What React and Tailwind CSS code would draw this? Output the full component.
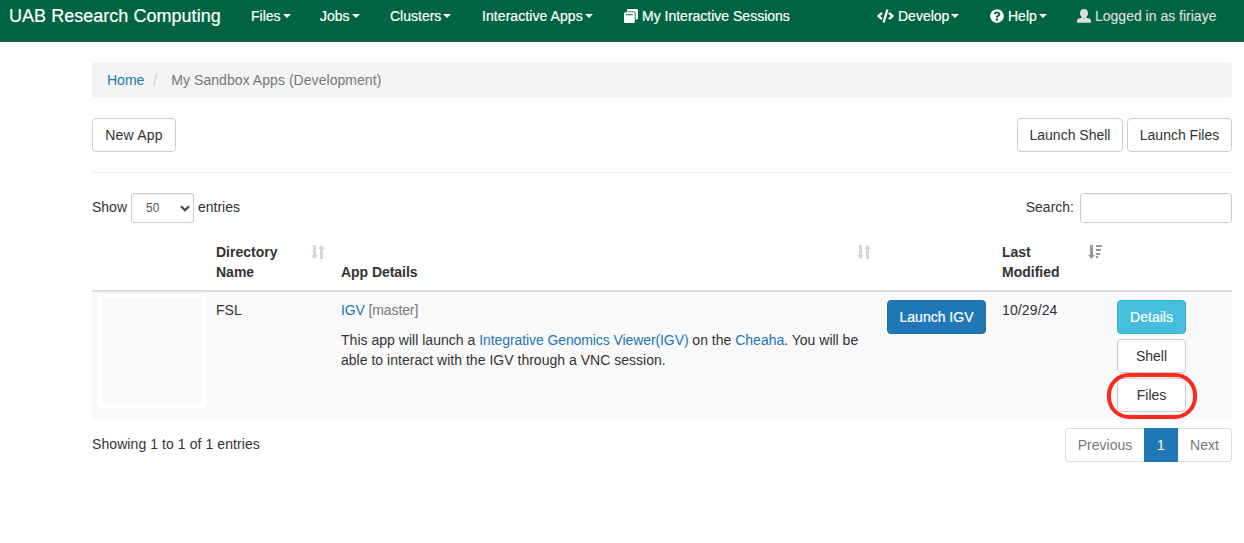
import { FaCode, FaQuestionCircle } from "react-icons/fa";

function Caret() {
  return (
    <span className="ml-0.5 inline-block border-x-4 border-t-4 border-x-transparent border-t-current align-middle" />
  );
}

function NavItem({ className, label, caret = true, children }) {
  return (
    <a className={`flex shrink-0 items-center whitespace-nowrap text-white [-webkit-text-stroke:0.2px] ${className}`}>
      {children}
      <span>{label}</span>
      {caret && <Caret />}
    </a>
  );
}

function Button({ className, children }) {
  return (
    <button
      className={`flex h-[34px] items-center justify-center whitespace-nowrap rounded border pb-px ${className}`}
    >
      {children}
    </button>
  );
}

function SessionsIcon() {
  return (
    <svg className="mr-1 size-[14px] shrink-0" viewBox="0 0 14 14" fill="currentColor">
      <path d="M4.200 0h8.400Q14 0 14 1.400v7.800q0 1.400-1.400 1.400h-1V4Q11.600 2.400 10 2.400H2.800V1.400Q2.800 0 4.200 0z" />
      <path
        fillRule="evenodd"
        d="M1.300 3.200h8.200q1.300 0 1.300 1.300v8.200q0 1.300-1.300 1.300H1.300Q0 14 0 12.700V4.500Q0 3.200 1.300 3.200zM1.900 5.200v1h6.800v-1z"
      />
    </svg>
  );
}

function UserIcon() {
  return (
    <svg className="mr-1 size-[14px] shrink-0" viewBox="0 0 14 14" fill="currentColor">
      <path d="M7 0c2.500 0 4 1.600 4 4 0 2-.8 3.500-1.900 4.300v.5l3.300.7q1.600.5 1.600 2.300v1.200q0 .8-.8.800H.8Q0 13.800 0 13v-1.200q0-1.800 1.600-2.300l3.300-.7v-.5C3.800 7.500 3 6 3 4 3 1.600 4.500 0 7 0z" />
    </svg>
  );
}

function SortIcon() {
  return (
    <svg className="mt-2.5 h-[14px] w-[14px] shrink-0 text-[#d6d6d6]" viewBox="0 0 14 14" fill="currentColor">
      <path d="M2 0h3v10h2L3.500 14 0 10h2zM9 14h3V4h2l-3.500-4L7 4h2z" />
    </svg>
  );
}

function SortDescIcon() {
  return (
    <svg className="mt-2.5 h-[14px] w-[14px] shrink-0 text-[#999]" viewBox="0 0 14 14" fill="currentColor">
      <path d="M2 0h3v10h2L3.500 14 0 10h2zM8 0h6v2H8zM8 4h5v2H8zM8 8h4v2H8zM8 11h2v2H8z" />
    </svg>
  );
}

const columns = "grid grid-cols-[116px_125px_546px_115px_115px_123px]";
const plain = "border-[#ccc] bg-white text-[#333]";

export default function App() {
  return (
    <div className="h-[543px] w-[1244px] overflow-hidden bg-white font-['Liberation_Sans',Arial,sans-serif] text-sm leading-5 text-[#333]">
      <nav className="flex h-[42px] items-start border-b border-[#2f4f43] bg-[#006341] pt-1.5">
        <a className="w-[242px] shrink-0 whitespace-nowrap pl-[9px] text-[18px] tracking-[0.03px] text-white [-webkit-text-stroke:0.2px]">
          UAB Research Computing
        </a>
        <NavItem className="w-[69px] pl-[9px]" label="Files" />
        <NavItem className="w-[70px] pl-[9px]" label="Jobs" />
        <NavItem className="w-[92px] pl-[9px]" label="Clusters" />
        <NavItem className="w-[142px] pl-[9px] tracking-[0.07px]" label="Interactive Apps" />
        <NavItem className="w-[253px] pl-[9px]" label="My Interactive Sessions" caret={false}>
          <SessionsIcon />
        </NavItem>
        <NavItem className="w-[113px] pl-[9px]" label="Develop">
          <FaCode className="mr-1 h-[14px] w-[17px]" />
        </NavItem>
        <NavItem className="w-[86px] pl-[9px]" label="Help">
          <FaQuestionCircle className="mr-1 size-[14px]" />
        </NavItem>
        <div className="flex items-center whitespace-nowrap pl-2.5 text-[#ddd] [-webkit-text-stroke:0.2px]">
          <UserIcon />
          <span>Logged in as firiaye</span>
        </div>
      </nav>

      <main className="ml-[92px] w-[1140px] pt-5">
        <div className="flex h-9 items-center rounded bg-[#f4f4f4] px-[15px]">
          <a className="text-[#1a76b5]">Home</a>
          <span className="ml-[9px] w-[18px] text-[#ccc]">/</span>
          <span className="tracking-[0.05px] text-[#777]">My Sandbox Apps (Development)</span>
        </div>

        <div className="mt-5 flex justify-between">
          <Button className={`w-[84px] tracking-[0.2px] ${plain}`}>New App</Button>
          <div className="flex gap-1">
            <Button className={`w-[106px] ${plain}`}>Launch Shell</Button>
            <Button className={`w-[105px] ${plain}`}>Launch Files</Button>
          </div>
        </div>
        <hr className="mt-5 border-[#eee]" />

        <div className="mt-5 flex h-[30px] items-center justify-between">
          <div className="flex items-center">
            <span className="w-[39px] pb-0.5">Show</span>
            <div className="flex h-[30px] w-[63px] items-center justify-between rounded-[3px] border border-[#ccc] pl-3.5 pr-[3px] text-xs text-[#555] shadow-[inset_0_1px_1px_rgba(0,0,0,0.075)]">
              <span>50</span>
              <svg className="h-[7px] w-[10px]" viewBox="0 0 10 7" fill="none" stroke="#444" strokeWidth="2.200">
                <path d="M1 1.200l4 4 4-4" />
              </svg>
            </div>
            <span className="ml-1 pb-0.5">entries</span>
          </div>
          <label className="flex items-center gap-1.5">
            <span className="pb-0.5">Search:</span>
            <input className="h-[30px] w-[152px] rounded-[3px] border border-[#ccc] px-2.5 shadow-[inset_0_1px_1px_rgba(0,0,0,0.075)]" />
          </label>
        </div>

        <div className="mt-3">
          <div className={`${columns} h-[57px] border-b-2 border-[#ddd] font-bold`}>
            <div />
            <div className="flex justify-between px-2">
              <span className="w-[72px] pt-[7px]">Directory Name</span>
              <SortIcon />
            </div>
            <div className="flex justify-between px-2">
              <span className="pt-[27px] tracking-[-0.05px]">App Details</span>
              <SortIcon />
            </div>
            <div />
            <div className="flex justify-between pl-2 pr-[7px]">
              <span className="w-[62px] pt-[7px]">Last Modified</span>
              <SortDescIcon />
            </div>
            <div />
          </div>

          <div className={`${columns} h-32 bg-[#f9f9f9]`}>
            <div className="pl-1.5 pt-0.5">
              <div className="h-[114px] w-[108px] border-4 border-white" />
            </div>
            <div className="px-2 pt-2">FSL</div>
            <div className="px-2 pt-2">
              <p className="tracking-[-0.12px]">
                <a className="text-[#1a76b5]">IGV</a> <span className="text-[#777]">[master]</span>
              </p>
              <p className="mt-2.5">
                <span className="tracking-[0.02px]">This app will launch a </span>
                <a className="tracking-[-0.09px] text-[#1a76b5]">Integrative Genomics Viewer(IGV)</a> on the{" "}
                <a className="text-[#1a76b5]">Cheaha</a>. You will be
                <br />
                <span className="tracking-[0.02px]">able to interact with the IGV through a VNC session.</span>
              </p>
            </div>
            <div className="px-2 pt-2">
              <Button className="w-[99px] border-[#1b6da8] bg-[#1f78b5] text-white [-webkit-text-stroke:0.2px]">
                Launch IGV
              </Button>
            </div>
            <div className="px-2 pt-2 tracking-[0.12px]">10/29/24</div>
            <div className="flex flex-col gap-[5px] px-2 pt-2">
              <Button className="w-[69px] border-[#28b3d3] bg-[#45bfdd] text-white [-webkit-text-stroke:0.2px]">
                Details
              </Button>
              <Button className={`w-[69px] ${plain}`}>Shell</Button>
              <div className="relative w-[69px]">
                <Button className={`w-[69px] ${plain}`}>Files</Button>
                <div className="absolute -left-2.5 -top-[5px] h-[46px] w-[90px] rounded-[22px] border-4 border-[#fb2a1d]" />
              </div>
            </div>
          </div>
        </div>

        <div className="mt-2 flex items-start justify-between">
          <span className="pt-1.5 tracking-[0.08px]">Showing 1 to 1 of 1 entries</span>
          <div className="flex h-[34px] text-[#777]">
            <span className="flex w-[79px] items-center justify-center rounded-l border-y border-l border-[#ddd]">
              Previous
            </span>
            <span className="flex w-[34px] items-center justify-center bg-[#1f78b5] text-white">1</span>
            <span className="flex w-[54px] items-center justify-center rounded-r border-y border-r border-[#ddd]">
              Next
            </span>
          </div>
        </div>
      </main>
    </div>
  );
}
